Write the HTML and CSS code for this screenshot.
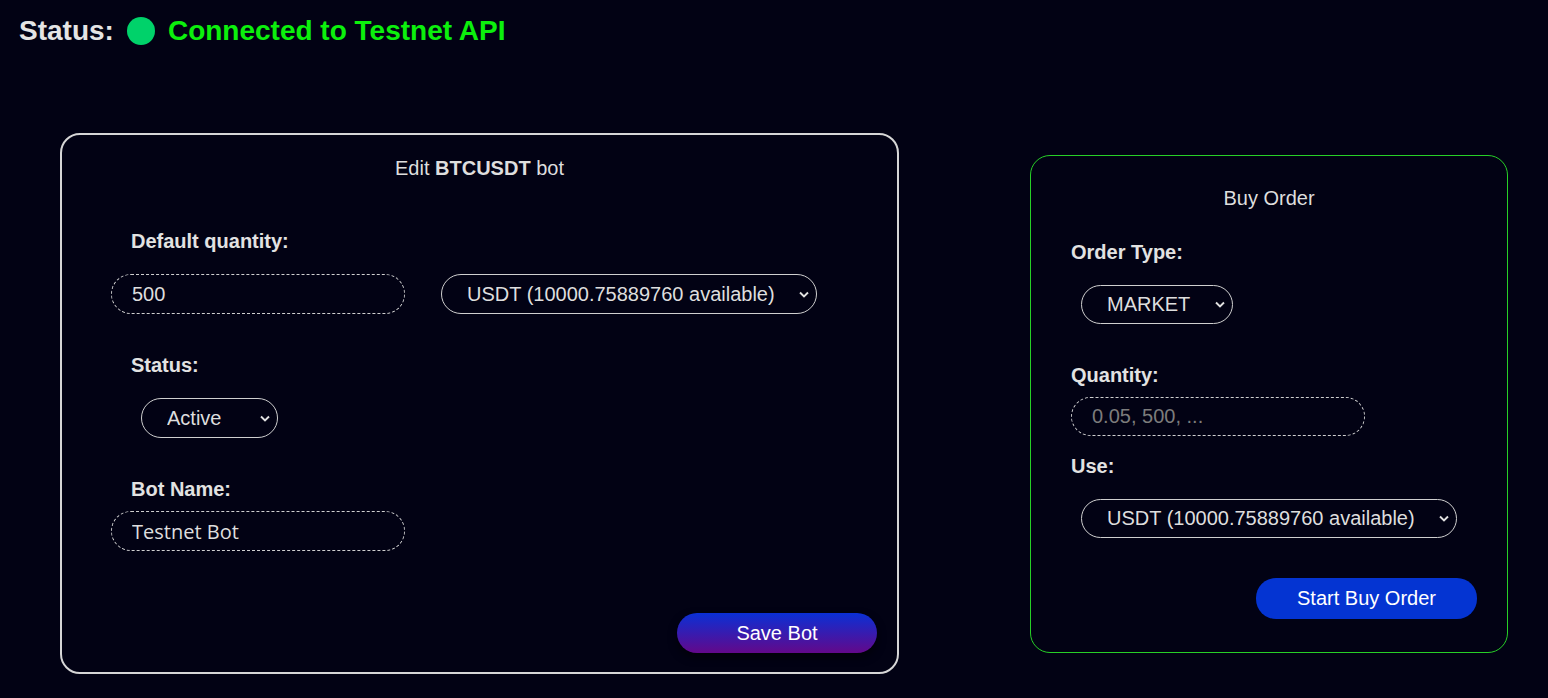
FILE: index.html
```html
<!DOCTYPE html>
<html lang="en">
<head>
    <meta charset="UTF-8">
    <meta name="viewport" content="width=device-width, initial-scale=1.0">
    <title>Testnet Bot</title>
    <link rel="stylesheet" href="styles.css">
</head>
<body>
    <div class="status-bar">
        <span class="status-label">Status:</span>
        <span class="status-dot"></span>
        <span class="status-text">Connected to Testnet API</span>
    </div>

    <div class="panels">
        <!-- Bot settings -->
        <form class="card bot-card" id="bot-form">
            <h3 class="card-title">Edit <b>BTCUSDT</b> bot</h3>

            <div class="form-group">
                <label for="default-qty">Default quantity:</label>
                <div class="qty-row">
                    <input type="text" id="default-qty" class="pill-input" value="500">
                    <select id="default-asset" class="pill-select">
                        <option>USDT (10000.75889760 available)</option>
                        <option>BTC (1.00000000 available)</option>
                    </select>
                </div>
            </div>

            <div class="form-group">
                <label for="bot-status">Status:</label>
                <select id="bot-status" class="pill-select">
                    <option>Active</option>
                    <option>Inactive</option>
                </select>
            </div>

            <div class="form-group last">
                <label for="bot-name">Bot Name:</label>
                <input type="text" id="bot-name" class="pill-input name-input" value="Testnet Bot">
            </div>

            <div class="actions">
                <button type="button" class="save-btn">Save Bot</button>
            </div>
        </form>

        <!-- Manual order -->
        <form class="card order-card" id="order-form">
            <h3 class="card-title">Buy Order</h3>

            <div class="form-group">
                <label for="order-type">Order Type:</label>
                <select id="order-type" class="pill-select">
                    <option>MARKET</option>
                    <option>LIMIT</option>
                </select>
            </div>

            <div class="form-group">
                <label for="order-qty">Quantity:</label>
                <input type="text" id="order-qty" class="pill-input" placeholder="0.05, 500, ...">
            </div>

            <div class="form-group">
                <label for="order-asset">Use:</label>
                <select id="order-asset" class="pill-select">
                    <option>USDT (10000.75889760 available)</option>
                    <option>BTC (1.00000000 available)</option>
                </select>
            </div>

            <div class="actions">
                <button type="button" class="buy-btn">Start Buy Order</button>
            </div>
        </form>
    </div>
</body>
</html>
```

FILE: styles.css
```css
body {
    font-family: "Liberation Sans", Arial, sans-serif;
    background-color: #020214;
    color: #dedede;
    margin: 0;
}
.status-bar {
    display: flex;
    align-items: center;
    gap: 13px;
    padding: 15px 19px 0;
    font-size: 28px;
    line-height: 32px;
    font-weight: bold;
}
.status-label {
    color: #e4e4e4;
}
.status-dot {
    width: 28px;
    height: 28px;
    border-radius: 50%;
    background-color: #00d26a;
}
.status-text {
    color: #0cf00c;
}
.panels {
    display: flex;
    align-items: center;
    gap: 131px;
    margin-top: 86px;
    padding-left: 60px;
}
.card {
    box-sizing: border-box;
    border-radius: 20px;
    margin: 0;
}
.bot-card {
    width: 839px;
    border: 2px solid #d6d6d6;
    padding: 22px 20px 19px 69px;
}
.order-card {
    width: 478px;
    border: 1px solid #27cf27;
    padding: 31px 30px 33px 40px;
}
.card-title {
    text-align: center;
    font-size: 20px;
    line-height: 23px;
    font-weight: normal;
    margin: 0 0 50px -49px;
}
.order-card .card-title {
    margin-left: -10px;
    margin-bottom: 31px;
}
.form-group {
    display: flex;
    flex-direction: column;
    align-items: flex-start;
    margin-bottom: 19px;
}
.form-group.last {
    margin-bottom: 0;
}
.form-group label {
    font-size: 20px;
    line-height: 23px;
    font-weight: bold;
    color: #e2e2e2;
}
.pill-input,
.pill-select {
    box-sizing: border-box;
    height: 40px;
    font-family: inherit;
    font-size: 20px;
    color: #dedede;
    background-color: transparent;
    border-radius: 20px;
    outline: none;
}
.pill-input {
    width: 294px;
    margin-top: 10px;
    padding: 0 20px;
    border: 1px dashed #cfcfcf;
}
.pill-input::placeholder {
    color: #7c7c7c;
}
.bot-card .pill-input {
    margin-left: -20px;
}
.name-input {
    font-family: "Open Sans", sans-serif;
}
.pill-select {
    appearance: none;
    -webkit-appearance: none;
    margin: 21px 0 21px 10px;
    padding: 0 41px 0 25px;
    border: 1px solid #cfcfcf;
    background-image: url("data:image/svg+xml,%3Csvg xmlns='http://www.w3.org/2000/svg' width='10' height='7' viewBox='0 0 10 7'%3E%3Cpath d='M1 1.5l4 4 4-4' fill='none' stroke='%23e0e0e0' stroke-width='1.9'/%3E%3C/svg%3E");
    background-repeat: no-repeat;
    background-position: right 7px center;
}
.order-card .pill-select,
.order-card .pill-input {
    height: 39px;
}
.pill-select option {
    background-color: #020214;
}
.qty-row {
    display: flex;
    align-items: center;
    gap: 36px;
    margin: 21px 0;
}
.qty-row .pill-input,
.qty-row .pill-select {
    margin-top: 0;
    margin-bottom: 0;
}
.qty-row .pill-select {
    margin-left: 0;
}
.actions {
    display: flex;
    justify-content: flex-end;
}
.bot-card .actions {
    margin-top: 62px;
}
.save-btn,
.buy-btn {
    font-family: inherit;
    font-size: 20px;
    color: #fff;
    border: none;
    border-radius: 20px;
    cursor: pointer;
}
.save-btn {
    width: 200px;
    height: 40px;
    background: linear-gradient(#0a30d6, #63088a);
    box-shadow: 0 4px 8px rgba(0, 0, 0, 0.6);
}
.buy-btn {
    width: 221px;
    height: 41px;
    background-color: #0434d2;
}
```
